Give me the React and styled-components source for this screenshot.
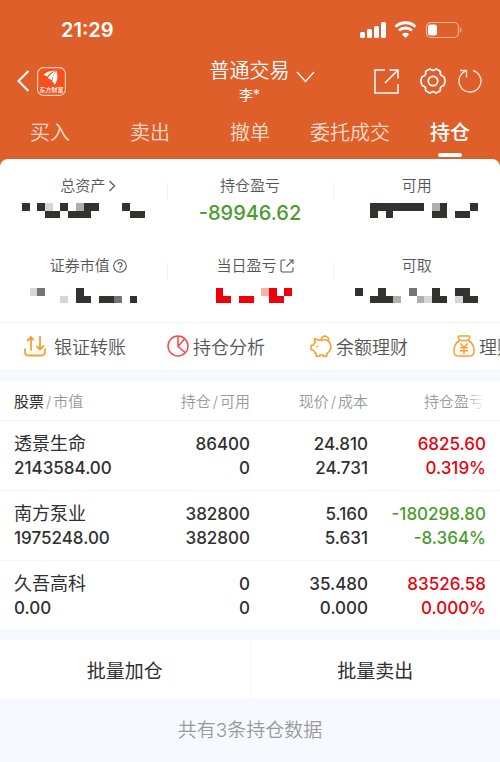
import React, { useState } from "react";
import styled, { createGlobalStyle } from "styled-components";

const tabs = ["买入", "卖出", "撤单", "委托成交", "持仓"];

const stats = [
  [
    {
      label: "总资产",
      icon: "chevron",
      mosaic: ["#.#l.#.g##...#..", "...##.###.....##"],
    },
    { label: "持仓盈亏", value: "-89946.62" },
    { label: "可用", mosaic: ["..#######.g#...#", "..#.#.....##.##."] },
  ],
  [
    {
      label: "证券市值",
      icon: "help",
      mosaic: [".lm....#........", ".....l.##.##m.#."],
    },
    {
      label: "当日盈亏",
      icon: "link",
      mosaic: [".r.....pr.r", ".rr.rr..rr."],
    },
    { label: "可取", mosaic: ["#..#...m..#..##.", "..###g..gl##.l##"] },
  ],
];

const stocks = [
  {
    name: "透景生命",
    marketValue: "2143584.00",
    hold: "86400",
    available: "0",
    price: "24.810",
    cost: "24.731",
    profit: "6825.60",
    rate: "0.319%",
  },
  {
    name: "南方泵业",
    marketValue: "1975248.00",
    hold: "382800",
    available: "382800",
    price: "5.160",
    cost: "5.631",
    profit: "-180298.80",
    rate: "-8.364%",
  },
  {
    name: "久吾高科",
    marketValue: "0.00",
    hold: "0",
    available: "0",
    price: "35.480",
    cost: "0.000",
    profit: "83526.58",
    rate: "0.000%",
  },
];

const mosaicColors = {
  "#": "#303330",
  m: "#737573",
  g: "#afafaf",
  l: "#d8d5d9",
  r: "#f2000a",
  p: "#f7b3a6",
};

const Mosaic = ({ rows }) => {
  const count = rows[0].length;
  return (
    <svg
      width={Math.round((count * 23) / 3)}
      height="15"
      viewBox={`0 0 ${count} 2`}
      preserveAspectRatio="none"
      aria-hidden="true"
    >
      {rows.map((row, y) =>
        row
          .split("")
          .map((cell, x) =>
            cell === "." ? null : (
              <rect
                key={`${x}-${y}`}
                x={x}
                y={y}
                width="1"
                height="1"
                fill={mosaicColors[cell]}
                shapeRendering="crispEdges"
              />
            )
          )
      )}
    </svg>
  );
};

const StatusIcons = () => (
  <svg width="102" height="18" viewBox="0 0 102 18" fill="none">
    <g fill="#fff">
      <rect x="0" y="11" width="5" height="6" rx="1.5" />
      <rect x="7" y="8" width="5" height="9" rx="1.5" />
      <rect x="14" y="5" width="5" height="12" rx="1.5" />
      <rect x="21" y="1" width="5" height="16" rx="1.5" />
      <path d="M45.5 17l-3.6-3.7a5.2 5.2 0 0 1 7.2 0z" />
    </g>
    <path
      d="M35.500 5.800a14.400 14.400 0 0 1 20 0M39 9.600a9.400 9.400 0 0 1 13 0"
      stroke="#fff"
      strokeWidth="2.800"
    />
    <rect
      x="66.5"
      y="1.5"
      width="32"
      height="15"
      rx="4.5"
      stroke="#f3b48f"
      strokeWidth="1.2"
    />
    <path d="M100 6.500c2 .6 2 4.400 0 5z" fill="#f3b48f" />
    <rect x="68" y="3.500" width="9" height="11" rx="2.500" fill="#fff" />
  </svg>
);

const BackIcon = () => (
  <svg width="13" height="22" viewBox="0 0 13 22" fill="none">
    <path d="M11.500 1L1.500 11l10 10" stroke="#fff" strokeWidth="2" />
  </svg>
);

const LogoIcon = () => (
  <svg width="29" height="29" viewBox="0 0 29 29">
    <rect
      x=".6"
      y=".6"
      width="27.800"
      height="27.800"
      rx="6"
      fill="#f4511c"
      stroke="#fbd0ba"
      strokeWidth="1.200"
    />
    <path
      d="M6.500 7.800C9 5.200 13 4 18.500 3.600c-4 1.500-6.700 3.500-8.300 5.800-1.200-.8-2.500-1-3.700-1.600z"
      fill="#fff"
    />
    <path
      d="M10.800 11.200c1.200-2.800 4-5.800 8-7.300-2 2.600-3.300 6.300-4 9.300-1.300-1.100-2.400-1.600-4-2z"
      fill="#fff"
    />
    <path
      d="M15.300 14.500c.3-4 1.700-7.800 4-10.800 1.900 4 1.500 10-1.700 14.400-.3-1.700-1-2.700-2.300-3.600z"
      fill="#fff"
    />
    <text
      x="14.500"
      y="25"
      textAnchor="middle"
      fontSize="6"
      fontWeight="500"
      fill="#fff"
    >
      东方财富
    </text>
  </svg>
);

const DownIcon = () => (
  <svg width="19" height="12" viewBox="0 0 19 12" fill="none">
    <path d="M1 1l8.500 9.500L18 1" stroke="#fff" strokeWidth="1.400" />
  </svg>
);

const ShareIcon = () => (
  <svg width="25" height="25" viewBox="0 0 25 25" fill="none">
    <path
      d="M11 1H1v23h23V15M15.500 1H24v8.500M23.500 1.500L11 14"
      stroke="#fff"
      strokeWidth="1.500"
    />
  </svg>
);

const GearIcon = () => (
  <svg width="26" height="26" viewBox="0 0 26 26" fill="none">
    <path
      d="M9.200 1.200q.8-.5 1.500.2Q13 3.500 15.300 1.400q.7-.7 1.500-.2l3 1.700q.8.500.6 1.400-.6 3 2.600 4 .9.200 1.200 1l.8 2.900q.2.800 0 1.600l-.8 2.900q-.3.800-1.200 1-3.200 1-2.600 4 .2.900-.6 1.400l-3 1.700q-.8.500-1.500-.2-2.300-2.100-4.600 0-.7.700-1.500.2l-3-1.700q-.8-.5-.6-1.400.6-3-2.600-4-.9-.2-1.200-1L1 13.800q-.2-.8 0-1.600l.8-2.900q.3-.8 1.200-1 3.200-1 2.600-4-.2-.9.600-1.400z"
      stroke="#fff"
      strokeWidth="1.700"
      strokeLinejoin="round"
    />
    <circle cx="13" cy="13" r="4.700" stroke="#fff" strokeWidth="1.700" />
  </svg>
);

const RefreshIcon = () => (
  <svg width="24" height="24" viewBox="0 0 24 24" fill="none">
    <path
      d="M15 1.500a11 11 0 1 1-7 .3M2 1.500h6.500v7"
      stroke="#fde5d8"
      strokeWidth="1.400"
    />
  </svg>
);

const labelIcons = {
  chevron: (
    <svg width="8" height="12" viewBox="0 0 8 12" fill="none">
      <path d="M1.500 1L6.500 6l-5 5" stroke="#555" strokeWidth="1.200" />
    </svg>
  ),
  help: (
    <svg width="14" height="14" viewBox="0 0 14 14" fill="none">
      <circle cx="7" cy="7" r="6.300" stroke="#555" strokeWidth="1.100" />
      <path
        d="M5 5.600a2 2 0 1 1 3 1.700q-1 .6-1 1.500M7 9.800v1.200"
        stroke="#555"
        strokeWidth="1.200"
      />
    </svg>
  ),
  link: (
    <svg width="14" height="14" viewBox="0 0 14 14" fill="none">
      <path
        d="M5.500 1H2.200Q1 1 1 2.200v9.600Q1 13 2.200 13h9.600q1.200 0 1.200-1.200V8.500M9 1h4v4M12.800 1.200L6.500 7.500"
        stroke="#555"
        strokeWidth="1.100"
      />
    </svg>
  ),
};

const actions = [
  {
    label: "银证转账",
    gap: 8,
    icon: (
      <svg width="22" height="22" viewBox="0 0 22 22" fill="none">
        <path
          d="M1 13.500v3.300Q1 20.500 4.200 20.500h13.600q3.200 0 3.200-3.700v-3.300M7 15.500V2M3 6l4-4 3 3.500M16 1v13.500M12.500 11l3.500 3.500 4-4"
          stroke="#f7a030"
          strokeWidth="1.800"
        />
      </svg>
    ),
  },
  {
    label: "持仓分析",
    gap: 4,
    icon: (
      <svg width="22" height="22" viewBox="0 0 22 22" fill="none">
        <circle cx="11" cy="11" r="10" stroke="#f2494d" strokeWidth="1.500" />
        <path
          d="M11 1v10.500l7 6M11 11.500L17.500 4"
          stroke="#f2494d"
          strokeWidth="1.500"
        />
      </svg>
    ),
  },
  {
    label: "余额理财",
    gap: 4,
    icon: (
      <svg width="22" height="22" viewBox="0 0 22 22" fill="none">
        <path
          d="M10 5.500L4.800 3.800q-.5 0-.4.600l.8 3Q4 8.500 3.400 10L1 10.500v4l2.600 1q1 2 2.600 3v2.700h3.600V20h3.400v1.200h3.600v-2.700q4-2 4-6.700 0-4-3.300-6.300-3.500-1.500-7.500 0zM11.200 4.800a3.700 3.700 0 1 1 7 1.700"
          stroke="#f7a030"
          strokeWidth="1.600"
          strokeLinejoin="round"
        />
        <circle cx="7.300" cy="11.500" r="1" fill="#f7a030" />
      </svg>
    ),
  },
  {
    label: "理财产品",
    gap: 4,
    icon: (
      <svg width="22" height="22" viewBox="0 0 22 22" fill="none">
        <path
          d="M6.800 5.500L5.300 2.300Q5 1 6.300 1h9.400q1.300 0 1 1.300l-1.500 3.200zM6.800 5.500Q1 8.500 1 15.500 1 21 5 21h12q4 0 4-5.500 0-7-5.800-10M7.500 8.500l3.500 4 3.500-4M7 12.700h8M7 15.700h8M11 12.500V19"
          stroke="#f7a030"
          strokeWidth="1.500"
          strokeLinejoin="round"
        />
      </svg>
    ),
  },
];

const Header = () => {
  const [active, setActive] = useState("持仓");

  return (
    <header>
      <StatusBar>
        <Time>21:29</Time>
        <StatusIcons />
      </StatusBar>
      <NavBar>
        <NavLeft>
          <IconButton aria-label="返回">
            <BackIcon />
          </IconButton>
          <LogoIcon />
        </NavLeft>
        <Account>
          <AccountButton>
            普通交易
            <DownIcon />
          </AccountButton>
          <UserName>李*</UserName>
        </Account>
        <NavRight>
          <IconButton aria-label="分享">
            <ShareIcon />
          </IconButton>
          <ToolGroup>
            <IconButton aria-label="设置">
              <GearIcon />
            </IconButton>
            <IconButton aria-label="刷新">
              <RefreshIcon />
            </IconButton>
          </ToolGroup>
        </NavRight>
      </NavBar>
      <Tabs>
        {tabs.map((tab) => (
          <Tab
            key={tab}
            $active={tab === active}
            onClick={() => setActive(tab)}
          >
            {tab}
          </Tab>
        ))}
      </Tabs>
    </header>
  );
};

const Holdings = () => (
  <Table>
    <colgroup>
      <col />
      <Col $width={118} />
      <Col $width={118} />
      <Col $width={132} />
    </colgroup>
    <thead>
      <tr>
        <Th>
          <Strong>股票</Strong>
          <Slash>/</Slash>市值
        </Th>
        <Th>
          持仓<Slash>/</Slash>可用
        </Th>
        <Th>
          现价<Slash>/</Slash>成本
        </Th>
        <Th>
          <Fade>持仓盈亏</Fade>
        </Th>
      </tr>
    </thead>
    <tbody>
      {stocks.map((stock) => {
        const down = stock.profit.startsWith("-");
        return (
          <tr key={stock.name}>
            <Td>
              <StockName>{stock.name}</StockName>
              <Line>{stock.marketValue}</Line>
            </Td>
            <Td>
              <Line>{stock.hold}</Line>
              <Line>{stock.available}</Line>
            </Td>
            <Td>
              <Line>{stock.price}</Line>
              <Line>{stock.cost}</Line>
            </Td>
            <Td $color={down ? "#4a9c2d" : "#ea0008"}>
              <Line>{stock.profit}</Line>
              <Line>{stock.rate}</Line>
            </Td>
          </tr>
        );
      })}
    </tbody>
  </Table>
);

const App = () => (
  <Page>
    <GlobalStyle />
    <Top>
      <Header />
      <Panel>
        {stats.map((row, i) => (
          <StatRow key={i} $second={i === 1}>
            {row.map((stat) => (
              <Stat key={stat.label} $tight={i === 0}>
                <StatLabel $hasIcon={Boolean(stat.icon)}>
                  {stat.label}
                  {labelIcons[stat.icon]}
                </StatLabel>
                {stat.value ? (
                  <StatValue>{stat.value}</StatValue>
                ) : (
                  <Mosaic rows={stat.mosaic} />
                )}
              </Stat>
            ))}
          </StatRow>
        ))}
        <Actions>
          {actions.map((action) => (
            <Action key={action.label} $gap={action.gap}>
              {action.icon}
              {action.label}
            </Action>
          ))}
        </Actions>
      </Panel>
    </Top>
    <Holdings />
    <BatchBar>
      <BatchButton>批量加仓</BatchButton>
      <BatchButton>批量卖出</BatchButton>
    </BatchBar>
    <Footer>共有3条持仓数据</Footer>
  </Page>
);

export default App;

const GlobalStyle = createGlobalStyle`
  * {
    box-sizing: border-box;
  }

  body {
    margin: 0;
    background: #f6faff;
    color: #303030;
    font-family: Inter, "Noto Sans CJK SC", sans-serif;
  }

  button {
    padding: 0;
    border: none;
    background: none;
    color: inherit;
    font: inherit;
    cursor: pointer;
  }

  svg {
    display: block;
    flex-shrink: 0;
  }
`;

const Page = styled.div`
  min-height: 100vh;
  overflow: hidden;
`;

const Top = styled.div`
  background: #df5f2a;
  color: #fff;
`;

const StatusBar = styled.div`
  display: flex;
  justify-content: space-between;
  align-items: center;
  height: 59px;
  padding: 0 38px 0 61px;
`;

const Time = styled.span`
  font-size: 20px;
  font-weight: 600;
`;

const NavBar = styled.div`
  display: grid;
  grid-template-columns: 1fr auto 1fr;
  align-items: start;
  padding: 0 18px 0 17px;
`;

const NavLeft = styled.div`
  display: flex;
  align-items: center;
  gap: 7px;
  height: 44px;
`;

const NavRight = styled.div`
  display: flex;
  justify-content: flex-end;
  align-items: center;
  gap: 21px;
  height: 44px;
`;

const ToolGroup = styled.div`
  display: flex;
  align-items: center;
  gap: 12px;
`;

const IconButton = styled.button`
  display: flex;
`;

const Account = styled.div`
  display: flex;
  flex-direction: column;
  align-items: center;
`;

const AccountButton = styled.button`
  display: flex;
  align-items: center;
  gap: 6px;
  padding-left: 25px;
  font-size: 20px;
  font-weight: 350;
  line-height: 24px;

  svg {
    margin-top: 12px;
  }
`;

const UserName = styled.span`
  font-size: 14px;
  line-height: 24px;
`;

const Tabs = styled.nav`
  display: flex;
  height: 52px;
  padding-top: 12px;
`;

const Tab = styled.button`
  display: flex;
  flex: 1;
  flex-direction: column;
  align-items: center;
  gap: 6px;
  color: ${({ $active }) => ($active ? "#fff" : "#fbdccb")};
  font-size: 20px;
  font-weight: ${({ $active }) => ($active ? 500 : 350)};
  line-height: 28px;

  &::after {
    content: "";
    width: 24px;
    height: 4px;
    border-radius: 2px;
    background: ${({ $active }) => ($active ? "#fff" : "transparent")};
  }
`;

const Panel = styled.div`
  border-radius: 8px 8px 0 0;
  background: #fff;
  color: #555;
`;

const StatRow = styled.div`
  display: grid;
  grid-template-columns: repeat(3, 1fr);
  height: ${({ $second }) => ($second ? 83 : 80)}px;
  padding-top: 15px;
`;

const Stat = styled.div`
  display: flex;
  flex-direction: column;
  align-items: center;
  gap: ${({ $tight }) => ($tight ? 5 : 10)}px;

  & + & {
    background: linear-gradient(#f4f4f4, #f4f4f4) no-repeat 0 8px / 1px 18px;
  }
`;

const StatLabel = styled.div`
  display: flex;
  align-items: center;
  gap: 3px;
  padding-left: ${({ $hasIcon }) => ($hasIcon ? 10 : 0)}px;
  font-size: 15px;
  font-weight: 350;
  line-height: 24px;
`;

const StatValue = styled.div`
  margin-top: -3px;
  color: #4a9c2d;
  font-size: 20px;
  font-weight: 500;
  line-height: 26px;
`;

const Actions = styled.div`
  display: flex;
  height: 47px;
  padding-left: 24px;
  border-top: 1px solid #f5f5f5;
  overflow: hidden;
`;

const Action = styled.button`
  display: flex;
  flex: 0 0 143px;
  align-items: center;
  gap: ${({ $gap }) => $gap}px;
  font-size: 18px;
  font-weight: 350;
  white-space: nowrap;
`;

const Table = styled.table`
  width: 100%;
  margin-top: 12px;
  border-spacing: 0;
  table-layout: fixed;
  background: #fff;
`;

const Col = styled.col`
  width: ${({ $width }) => $width}px;
`;

const Th = styled.th`
  height: 40px;
  padding: 0;
  border-bottom: 1px solid #f3f3f3;
  color: #999;
  font-size: 15px;
  font-weight: 350;
  text-align: right;

  &:first-child {
    padding-left: 14px;
    text-align: left;
  }

  &:last-child {
    padding-right: 16px;
  }
`;

const Strong = styled.span`
  color: #303030;
  font-weight: 400;
`;

const Slash = styled.span`
  margin: 0 2px;
`;

const Fade = styled.span`
  mask-image: linear-gradient(to right, #000 70%, transparent);
`;

const Td = styled.td`
  height: 70px;
  padding: 0;
  border-bottom: 1px solid #f5f5f5;
  color: ${({ $color }) => $color || "#303030"};
  font-size: 17px;
  font-weight: 500;
  text-align: right;

  &:first-child {
    padding-left: 14px;
    text-align: left;
  }

  &:last-child {
    padding-right: 14px;
  }
`;

const Line = styled.div`
  line-height: 24px;
`;

const StockName = styled.div`
  font-size: 18px;
  font-weight: 400;
  line-height: 24px;
`;

const BatchBar = styled.div`
  display: grid;
  grid-template-columns: 1fr 1fr;
  gap: 1px;
  margin-top: 9px;
`;

const BatchButton = styled.button`
  height: 59px;
  background: #fff;
  font-size: 19px;
`;

const Footer = styled.footer`
  padding: 18px 0;
  color: #999;
  font-size: 19px;
  font-weight: 350;
  line-height: 28px;
  text-align: center;
`;
